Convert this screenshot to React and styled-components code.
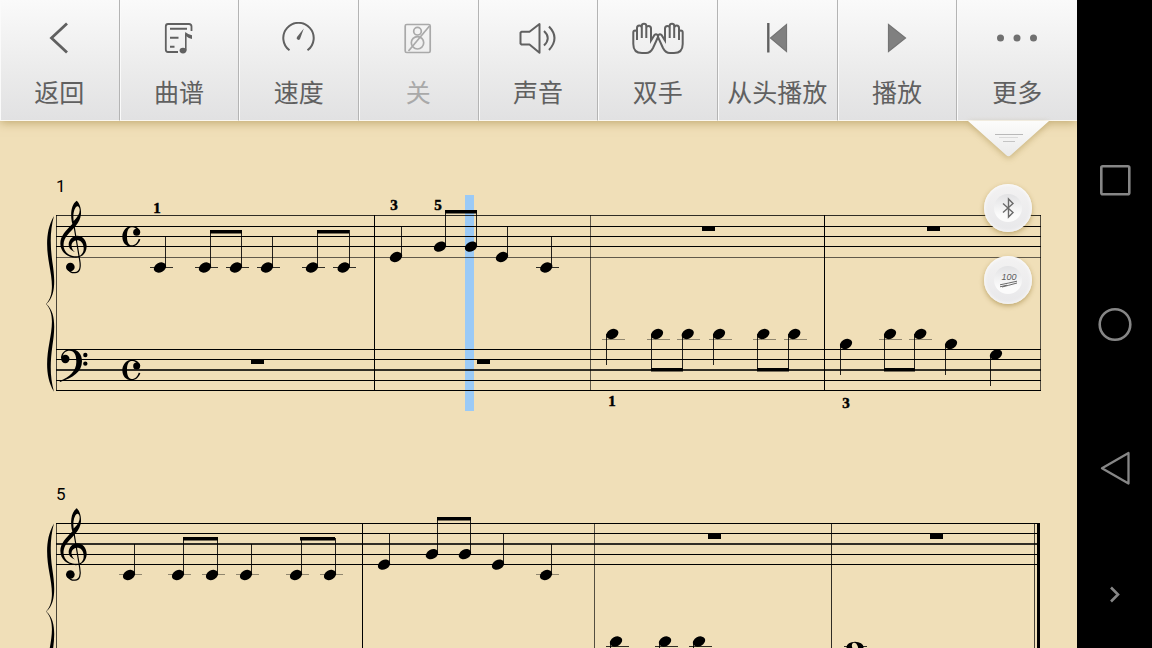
import styled, { createGlobalStyle } from 'styled-components'
import { useState } from "react";


const GlobalStyle = createGlobalStyle`
    * {
        box-sizing: border-box;
    }
    body {
        margin: 0;
        background-color: #000;
        font-family: "Noto Sans CJK SC", "Noto Sans", sans-serif;
    }
`
const Screen = styled.div`
    display: flex;
    height: 100vh;
    overflow: hidden;
`
const Player = styled.main`
    flex: 1;
    min-width: 0;
    display: flex;
    flex-direction: column;
    position: relative;
    overflow: hidden;
    background-color: #f0dfb8;
`
const Toolbar = styled.div`
    display: grid;
    grid-template-columns: repeat(9, 1fr);
    background: linear-gradient(#fafafa, #ececec 55%, #e1e1e2);
    box-shadow: 0 1px 10px rgba(130, 100, 20, 0.5);
    position: relative;
    z-index: 1;
`
const Tool = styled.button`
    display: flex;
    flex-direction: column;
    align-items: center;
    gap: 22px;
    padding: 22px 0 14px;
    border: none;
    border-right: 1px solid #b4b4b4;
    border-bottom: 1px solid #fbf8f0;
    box-shadow: inset 1px 0 0 #fafafa;
    background-color: transparent;
    color: ${props => props.$muted ? "#a9a9a9" : "#606060"};
    cursor: pointer;
    &:last-child {
        border-right: none;
    }
`
const ToolIcon = styled.svg`
    display: block;
    width: 54px;
    height: 32px;
    fill: none;
    stroke: currentColor;
    stroke-width: 2;
`
const ToolLabel = styled.span`
    font-family: "Noto Sans CJK SC", sans-serif;
    font-size: 25px;
    line-height: 30px;
    white-space: nowrap;
`
const Sheet = styled.div`
    flex: 1;
    min-height: 0;
    overflow: hidden;
`
const Score = styled.svg`
    display: block;
    width: 100%;
    height: auto;
`
const BarNumber = styled.text`
    font-family: Roboto, sans-serif;
    font-size: 17px;
`
const Finger = styled.text`
    font-family: "Liberation Serif", serif;
    font-size: 15px;
    font-weight: bold;
    text-anchor: middle;
    stroke: #000;
    stroke-width: 0.5;
`
const PullTab = styled.button`
    position: absolute;
    top: 121px;
    right: 28px;
    padding: 0;
    border: none;
    background-color: transparent;
    cursor: pointer;
    z-index: 2;
    svg {
        display: block;
        filter: drop-shadow(0 2px 3px rgba(130, 100, 20, 0.35));
    }
`
const FloatButtons = styled.div`
    position: absolute;
    top: 184px;
    right: 45px;
    display: flex;
    flex-direction: column;
    gap: 24px;
`
const RoundButton = styled.button`
    width: 48px;
    height: 48px;
    display: flex;
    align-items: center;
    justify-content: center;
    padding: 0;
    border: none;
    border-radius: 50%;
    background: linear-gradient(#f3f2f2, #e8e8ea);
    box-shadow: 0 2px 5px rgba(130, 100, 20, 0.45), inset 0 0 4px #fff;
    cursor: pointer;
`
const RoundInner = styled.span`
    width: 28px;
    height: 28px;
    border-radius: 50%;
    background: linear-gradient(#e2e2e4, #fbfbfb 75%);
`
const Score100 = styled.text`
    font-family: "Liberation Sans", sans-serif;
    font-size: 9px;
    font-style: italic;
    text-anchor: middle;
    fill: #5c5c5c;
    stroke: none;
`
const NavBar = styled.nav`
    width: 75px;
    display: grid;
    grid-template-rows: 3fr 4fr 4fr 4fr 3fr;
    background-color: #000;
    &::before {
        content: "";
    }
`
const NavButton = styled.button`
    display: flex;
    align-items: center;
    justify-content: center;
    padding: 0;
    border: none;
    background-color: transparent;
    color: #868686;
    cursor: pointer;
`
const NavIcon = styled.svg`
    width: 36px;
    height: 36px;
    fill: none;
    stroke: currentColor;
    stroke-width: 2.6;
`

const hand = "M2.3 22V10.5Q2.3 8.5 4.2 8.5Q6 8.5 6 10.5V18M6 10.5V6Q6 3.5 8.3 3.5Q10.8 3.5 10.8 6V16M10.8 6V4Q10.8 1.8 13 1.8Q15.3 1.8 15.3 4V16M15.3 6Q15.3 4 17.5 4Q20 4 20 6.5V18.5L23.5 13Q25 11.5 26.5 13Q27.5 14 26.8 15.5L22 26Q19.5 31 15 31H11Q2.3 31 2.3 22"

const tools = [
    { id: "back", label: "返回", icon: <path d="M35 1.5L19.5 16L35 30.5" strokeWidth="2.8" /> },
    {
        id: "sheet", label: "曲谱", icon: <>
            <path d="M39.5 9V4.5Q39.5 2 37 2H16Q13.8 2 13.8 4.5V27.5Q13.8 30 16 30H26" strokeWidth="1.8" />
            <path d="M18 6.7H35M18 15.8H26.5M18 24.8H22.5" strokeWidth="1.9" />
            <path d="M33.8 28.5V11.5" strokeWidth="1.6" />
            <path d="M33.2 10Q36 12.500 40 13.200V17Q36 16 33.200 13.500Z" fill="currentColor" stroke="none" />
            <ellipse cx="31" cy="28.6" rx="3.4" ry="2.8" fill="currentColor" stroke="none" />
        </>
    },
    {
        id: "tempo", label: "速度", icon: <>
            <path d="M17.5 28.3A15.2 15.2 0 1 1 35.5 28.3" strokeWidth="2" />
            <path d="M31.8 6.5L28 17A1.8 1.8 0 1 1 25 15Z" fill="currentColor" stroke="none" />
        </>
    },
    {
        id: "metronome", label: "关", muted: true, icon: <>
            <rect x="14.2" y="2.5" width="25" height="28" rx="1.5" strokeWidth="1.7" />
            <circle cx="26.5" cy="9.2" r="3.8" strokeWidth="1.7" />
            <circle cx="26.5" cy="20.8" r="6.2" strokeWidth="1.7" />
            <path d="M38.5 4L17.5 29" strokeWidth="1.7" />
        </>
    },
    {
        id: "sound", label: "声音", icon: <>
            <path d="M10.5 9.7H18.5L28.5 2V30.7L18.5 22.5H10.5L9.5 21.5V10.7Z" strokeLinejoin="round" />
            <path d="M33 9Q40.5 16 33 23.5M38 4.5Q49 16 38 28" />
        </>
    },
    {
        id: "hands", label: "双手", icon: <>
            <path d={hand} />
            <path d={hand} transform="translate(54 0) scale(-1 1)" />
        </>
    },
    {
        id: "restart", label: "从头播放", icon: <>
            <path d="M18.3 1V30.5" strokeWidth="2.4" />
            <path d="M36.5 2.5V29.5L20.5 16Z" fill="#808080" stroke="#747474" strokeWidth="1.2" />
        </>
    },
    { id: "play", label: "播放", icon: <path d="M18.5 2.5V29.5L35.5 16Z" fill="#808080" stroke="#747474" strokeWidth="1.2" /> },
    {
        id: "more", label: "更多", icon: <g fill="#707070" stroke="none">
            <circle cx="10.5" cy="16" r="3.5" />
            <circle cx="27" cy="16" r="3.5" />
            <circle cx="43.5" cy="16" r="3.5" />
        </g>
    },
]

// staff lines: [y, thickness, opacity]
// notes: [x, y, stem end], beams: [x1, x2, y], ledgers: [note x, y, opacity]
const systems = [
    {
        number: 1,
        top: 215,
        offset: 0,
        end: 1041,
        lines: [
            [215, 1, 0.8], [226, 1, 1], [236, 1, 1], [246, 1, 1], [257, 1, 0.6],
            [349, 1, 1], [359, 1, 1], [369, 2, 0.8], [380, 1, 1], [390, 1, 1],
        ],
        bars: [[56, 0.7], [374, 1], [590, 0.6], [824, 1], [1040, 0.65]],
        common: true,
        notes: [
            [160, 267.5, 237], [205, 267.5, 230], [236, 267.5, 230], [267, 267.5, 236], [312, 267.5, 230], [343.7, 267.5, 230],
            [396, 257, 226], [440, 246.7, 210], [471, 246.7, 210], [502, 257, 226], [546.3, 267.5, 236],
            [612.3, 334, 365], [657, 334, 370], [687.7, 334, 370], [719, 334, 365], [763.3, 334, 370], [794.3, 334, 370],
            [846, 344, 375], [890, 334, 370], [920.3, 334, 370], [951, 344, 375], [996, 354.5, 386],
        ],
        beams: [[210, 242, 230], [317, 349, 230], [445, 477, 210], [651, 683, 368], [757, 789, 368], [884, 915, 368]],
        ledgers: [
            [160, 267, 0.8], [205, 267, 0.8], [236, 267, 0.8], [267, 267, 0.8], [312, 267, 0.8], [343, 267, 0.8], [546, 267, 0.8],
            [612, 339, 0.4], [657, 339, 0.4], [687, 339, 0.4], [719, 339, 0.4], [763, 339, 0.4], [794, 339, 0.4], [889, 339, 0.4], [919, 339, 0.4],
        ],
        rests: [[251, 359], [477, 359], [702, 226], [927, 226]],
        fingers: [[157, 213, "1"], [394, 210, "3"], [438, 210, "5"], [612, 406, "1"], [846, 408, "3"]],
    },
    {
        number: 5,
        top: 523,
        offset: 307.5,
        end: 1040,
        lines: [
            [523, 1, 1], [533, 1, 1], [543, 2, 0.8], [554, 1, 1], [564, 1, 1],
        ],
        bars: [[56, 0.7], [362, 1], [594, 0.65], [831, 0.8], [1034, 0.7]],
        notes: [
            [129, 575, 544], [178, 575, 538], [212, 575, 538], [246, 575, 544], [296, 575, 538], [330, 575, 538],
            [384, 564.7, 533], [432, 554.2, 518], [465, 554.2, 518], [498, 564.7, 533], [546, 575, 544],
            [616, 641.5, 672], [665, 641.5, 672], [699, 641.5, 672],
        ],
        beams: [[183, 218, 537], [300, 335, 537], [437, 471, 517]],
        ledgers: [
            [129, 574, 0.4], [178, 574, 0.4], [212, 574, 0.4], [246, 574, 0.4], [296, 574, 0.4], [330, 574, 0.4], [546, 574, 0.4],
            [616, 646, 0.8], [665, 646, 0.8], [699, 646, 0.8], [854, 646, 0.8],
        ],
        rests: [[708, 534], [930, 534]],
        fingers: [],
        whole: [855, 647],
        final: true,
    },
]

function Brace() {
    return <path d="M72 138C44 185 50 240 58 285C66 330 74 376 48 402C74 428 66 474 58 519C50 564 44 619 72 665C60 625 60 580 67 529C74 484 80 428 49 402C80 376 74 320 67 275C60 225 60 180 72 138Z" />
}

function TrebleClef() {
    return (
        <g>
            <path fillRule="evenodd" d="M140 92C150 100 154 118 153 132C151 160 128 176 115 192C101 207 97 224 104 240C111 255 128 260 142 259C156 258 162 246 161 233C160 219 152 211 141 211C129 212 123 222 125 231C127 239 131 243 135 246C124 243 116 235 116 223C117 208 128 198 142 197C158 197 169 210 170 228C170 248 158 262 138 263C112 263 91 246 91 220C91 198 108 181 127 162C121 140 121 105 140 92ZM131 153C143 142 150 130 149 119C148 107 141 105 136 114C130 124 129 138 131 153Z" />
            <path d="M130 155L149 270C153 292 150 307 135 308C125 309 118 304 114 298" fill="none" stroke="#000" strokeWidth="3.6" />
            <circle cx="121" cy="291" r="13" />
        </g>
    )
}

function BassClef() {
    return (
        <g>
            <path d="M93 566C93 548 106 538 122 538C143 538 156 552 156 574C156 606 128 624 90 636L89 633C118 621 139 604 139 576C139 554 133 542 119 542C107 542 98 550 98 562Z" />
            <circle cx="106" cy="567" r="12.5" />
            <circle cx="166" cy="555" r="6.5" />
            <circle cx="166" cy="581" r="6.5" />
        </g>
    )
}

function CommonTime() {
    return (
        <g>
            <path d="M331 208C327 222 316 230 304 230C288 230 277 217 277 200C277 182 290 168 306 168C319 168 329 176 331 187L320 178C315 173 310 172 304 172C294 173 291 185 291 200C291 216 296 226 305 226C316 226 323 218 326 207Z" />
            <circle cx="320" cy="187" r="10.5" />
        </g>
    )
}

function Note({ x, y, end }) {
    const up = end < y
    return (
        <g>
            <ellipse cx={x} cy={y} rx="6.5" ry="4.7" transform={`rotate(-28 ${x} ${y})`} />
            <rect x={Math.floor(up ? x + 5.4 : x - 5.6)} y={up ? end : y} width="1" height={Math.abs(end - y)} opacity="0.85" />
        </g>
    )
}

function System({ data }) {
    return (
        <g>
            <BarNumber x="56" y={data.top - 23}>{data.number}</BarNumber>
            {data.lines.map(([y, h, o]) => (
                <rect key={y} x="56" y={y} width={data.end - 56} height={h} opacity={o} />
            ))}
            {data.bars.map(([x, o]) => (
                <rect key={x} x={x} y={data.top} width="1" height="176" opacity={o} />
            ))}
            {data.final && <rect x="1037" y={data.top} width="3" height="176" />}
            <g transform={`translate(30 ${170 + data.offset}) scale(0.33333)`}>
                <Brace />
                <TrebleClef />
                <BassClef />
                {data.common && <CommonTime />}
                {data.common && <g transform="translate(0 401)"><CommonTime /></g>}
            </g>
            {data.ledgers.map(([x, y, o]) => (
                <rect key={x} x={x - 10} y={y} width="23" height="1" opacity={o} />
            ))}
            {data.notes.map(([x, y, end]) => (
                <Note key={x} x={x} y={y} end={end} />
            ))}
            {data.beams.map(([x1, x2, y]) => (
                <rect key={x1} x={x1} y={y} width={x2 - x1} height="3.5" />
            ))}
            {data.rests.map(([x, y]) => (
                <rect key={x} x={x} y={y} width="13" height="5" />
            ))}
            {data.fingers.map(([x, y, text]) => (
                <Finger key={x} x={x} y={y}>{text}</Finger>
            ))}
            {data.whole && (
                <g>
                    <ellipse cx={data.whole[0]} cy={data.whole[1]} rx="8.5" ry="5.2" />
                    <ellipse cx={data.whole[0]} cy={data.whole[1]} rx="2.8" ry="4.4" fill="#f0dfb8" transform={`rotate(-20 ${data.whole[0]} ${data.whole[1]})`} />
                </g>
            )}
        </g>
    )
}

function App() {
    const [active, setActive] = useState(null)
  return (
    <Screen>
        <GlobalStyle/>
        <Player>
            <Toolbar>
                {tools.map((item) => (
                    <Tool key={item.id} $muted={item.muted} aria-pressed={active === item.id} onClick={()=>setActive(item.id)}>
                        <ToolIcon viewBox="0 0 54 32">{item.icon}</ToolIcon>
                        <ToolLabel>{item.label}</ToolLabel>
                    </Tool>
                ))}
            </Toolbar>
            <Sheet>
                <Score viewBox="0 121 1077 527">
                    <rect x="465" y="195" width="9" height="216" fill="#9bcaf6" />
                    {systems.map((item) => (
                        <System key={item.number} data={item}/>
                    ))}
                </Score>
            </Sheet>
            <PullTab aria-label="收起">
                <svg width="81" height="37" viewBox="0 0 81 37">
                    <defs>
                        <linearGradient id="tab" x1="0" y1="0" x2="0" y2="1">
                            <stop offset="0" stopColor="#fcfcfb" />
                            <stop offset="1" stopColor="#ebebeb" />
                        </linearGradient>
                    </defs>
                    <path d="M0 0H81L43 34Q40.5 36.5 38 34Z" fill="url(#tab)" />
                    <path d="M27 13.5H55" stroke="#b9b9b9" />
                    <path d="M31 16.5H50" stroke="#dadada" />
                    <path d="M35 20.5H47" stroke="#c4c4c4" />
                </svg>
            </PullTab>
            <FloatButtons>
                <RoundButton aria-label="蓝牙">
                    <RoundInner>
                        <svg width="28" height="28" viewBox="0 0 28 28" fill="none" stroke="#6a6a6a" strokeWidth="1.4">
                            <path d="M9 9.5L19 18.5L14.5 23V5L19 9.5L9 18.5" />
                        </svg>
                    </RoundInner>
                </RoundButton>
                <RoundButton>
                    <RoundInner>
                        <svg width="28" height="28" viewBox="0 0 28 28" fill="none" stroke="#6a6a6a">
                            <Score100 x="15" y="14">100</Score100>
                            <path d="M6 18.8Q15 17 23 15.2M6 20.8L13 19.2M8 21Q14 19.500 23 17" />
                        </svg>
                    </RoundInner>
                </RoundButton>
            </FloatButtons>
        </Player>
        <NavBar>
            <NavButton aria-label="最近任务">
                <NavIcon viewBox="0 0 36 36"><rect x="4.3" y="4.3" width="28" height="28" rx="1.5" /></NavIcon>
            </NavButton>
            <NavButton aria-label="主屏幕">
                <NavIcon viewBox="0 0 36 36"><circle cx="18" cy="18.5" r="15.3" /></NavIcon>
            </NavButton>
            <NavButton aria-label="后退">
                <NavIcon viewBox="0 0 36 36"><path d="M31.5 3V33.5L5 18.3Z" strokeLinejoin="round" strokeWidth="2.3" /></NavIcon>
            </NavButton>
            <NavButton aria-label="隐藏导航栏">
                <NavIcon viewBox="0 0 36 36"><path d="M14 11.5L21 18.5L14 25.5" /></NavIcon>
            </NavButton>
        </NavBar>
    </Screen>
  )
}

export default App
